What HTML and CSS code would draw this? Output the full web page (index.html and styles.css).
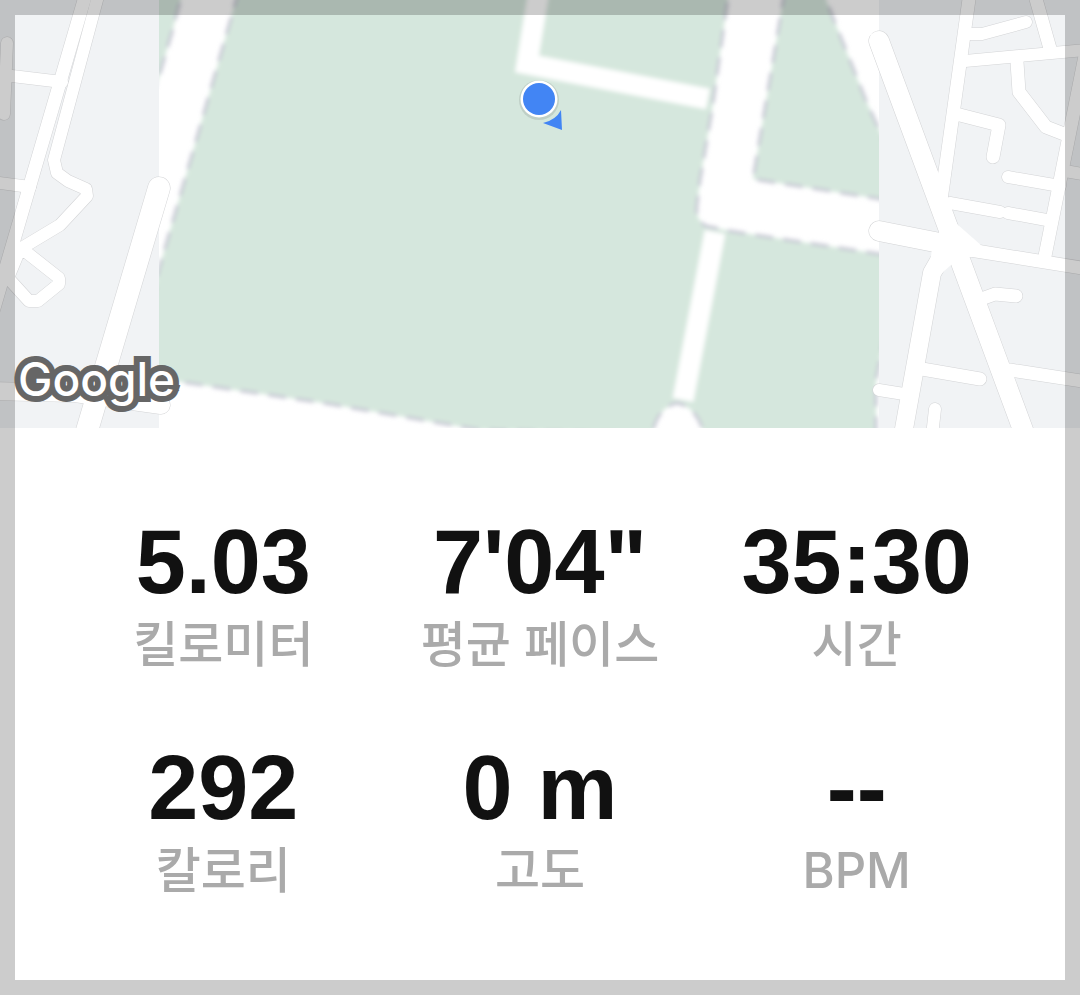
FILE: index.html
```
<!DOCTYPE html>
<html lang="ko">
<head>
    <meta charset="UTF-8">
    <meta name="viewport" content="width=device-width, initial-scale=1.0">
    <title>러닝 기록</title>
    <link rel="stylesheet" href="styles.css">
</head>
<body>

    <div class="run-card">
        <!-- Map -->
        <svg class="map" viewBox="0 0 1080 428" role="img" aria-label="지도">
            <defs>
                <clipPath id="tile-clip">
                    <rect x="159" y="0" width="720" height="428"/>
                </clipPath>
                <filter id="soft" filterUnits="userSpaceOnUse" x="140" y="-20" width="760" height="470">
                    <feGaussianBlur stdDeviation="2"/>
                </filter>
                <g id="roads">
                    <path class="w12" d="M7 43L4 114M12 76L62 82M-8 182L30 187M26 252L59 278V284L38 301H29L8 278L20 249L60 225L87 196L86 189L68 181L57 173L54 160L97 0L100 -10"/>
                    <path class="w14" d="M87-10L-20 356"/>
                    <path class="w22" d="M159 188L86 434"/>
                    <path class="w18" d="M-8 391L75 393L161 405"/>
                    <path class="w12" d="M970 34H982L1026 22M965 61L1085 50M1008 177L1060 186M1065 171L1088 175M950 203L1000 212M1008 213L1052 221M879 390L904 394M935 409L932 436"/>
                    <path class="w14" d="M970-8L941 200M1034-8L1051 52M1017 62L1019 92L1046 127L1064 134M956 114L999 125L993 157M1087 46L1045 256M970 250L1088 269M984 298L995 294L1016 296M922 369L980 379M1010 370L1088 382"/>
                    <path class="w18" d="M944 252L932 273L902 440"/>
                    <path class="w20" d="M879 41L1026 438M879 231L955 246"/>
                </g>
            </defs>

            <rect class="land" width="1080" height="428"/>

            <!-- low zoom tile with the park -->
            <g clip-path="url(#tile-clip)">
                <rect class="white" x="159" width="720" height="428"/>
                <g filter="url(#soft)">
                    <path class="park" d="M140-10H183L172 32L158 80L140 110Z"/>
                    <path class="park" d="M239-10L200 127L157 276L140 380L175 381L330 404L480 430L652 434Q658 407 677 403Q697 407 704 434H876V380L900 257L879 254L730 231L706 226Q695 220 697 205L700 180L712 110L729-10Z"/>
                    <path class="park" d="M785-10L753 179L900 202V176L867 103L822-10Z"/>
                    <path class="walk" d="M539-10L527 64L708 99M715 232L683 400"/>
                </g>
            </g>

            <use href="#roads" class="casing"/>
            <use href="#roads" class="fill"/>
            <path class="white" d="M945 192L948 203L957 224L982 246L975 257L960 257L941 274L930 262L932 249L940 235Z"/>

            <!-- current location -->
            <circle class="marker-shadow" cx="539" cy="100" r="20"/>
            <circle class="white" cx="539" cy="99" r="18.5"/>
            <circle class="marker" cx="539" cy="99" r="16"/>
            <path class="marker" d="M561 110L562 130L543 123Q556 120 561 110Z"/>

            <text class="map-logo" x="18" y="396">Google</text>
        </svg>

        <!-- Stats -->
        <div class="stats">
            <div class="stat">
                <div class="value">5.03</div>
                <div class="label">킬로미터</div>
            </div>
            <div class="stat">
                <div class="value">7'04"</div>
                <div class="label">평균 페이스</div>
            </div>
            <div class="stat">
                <div class="value">35:30</div>
                <div class="label">시간</div>
            </div>
            <div class="stat">
                <div class="value">292</div>
                <div class="label">칼로리</div>
            </div>
            <div class="stat">
                <div class="value">0 m</div>
                <div class="label">고도</div>
            </div>
            <div class="stat">
                <div class="value">--</div>
                <div class="label">BPM</div>
            </div>
        </div>
    </div>

</body>
</html>
```
FILE: styles.css
```
body {
    font-family: "Liberation Sans", "Noto Sans CJK KR", sans-serif;
    margin: 0;
    background-color: #ffffff;
}
.run-card {
    position: relative;
    min-height: 100vh;
}
/* translucent frame over the map and the stats */
.run-card::after {
    content: "";
    position: absolute;
    inset: 0;
    border: 15px solid rgba(0, 0, 0, 0.2);
    pointer-events: none;
}

/* Map */
.map {
    display: block;
    width: 100%;
}
.land {
    fill: #f1f3f5;
}
.white {
    fill: #ffffff;
}
.park {
    fill: #d5e7dd;
    stroke: #c6c6d3;
    stroke-width: 3;
    stroke-dasharray: 18 10;
}
.walk {
    fill: none;
    stroke: #ffffff;
    stroke-width: 21;
}
.casing, .fill {
    fill: none;
    stroke-linecap: round;
    stroke-linejoin: round;
}
.casing {
    stroke: #d3d4d6;
    --edge: 1px;
}
.fill {
    stroke: #ffffff;
    --edge: 0px;
}
.w12 {
    stroke-width: calc(12px + var(--edge));
}
.w14 {
    stroke-width: calc(13px + var(--edge));
}
.w18 {
    stroke-width: calc(18px + var(--edge));
}
.w20 {
    stroke-width: calc(20px + var(--edge));
}
.w22 {
    stroke-width: calc(22px + var(--edge));
}
.marker {
    fill: #4285f4;
}
.marker-shadow {
    fill: rgba(0, 0, 0, 0.1);
}
.map-logo {
    font-family: Inter, sans-serif;
    font-size: 46px;
    font-weight: 500;
    fill: #ffffff;
    stroke: #666666;
    stroke-width: 12px;
    paint-order: stroke;
}

/* Stats */
.stats {
    display: grid;
    grid-template-columns: repeat(3, 1fr);
    row-gap: 60px;
    padding: 82px 65px;
}
.stat {
    text-align: center;
}
.value {
    color: #111111;
    font-size: 90px;
    font-weight: 700;
    line-height: 104px;
}
.label {
    color: #aaaaaa;
    font-family: Inter, "Noto Sans CJK KR", sans-serif;
    font-size: 49px;
    font-weight: 500;
    line-height: 62px;
}
```
